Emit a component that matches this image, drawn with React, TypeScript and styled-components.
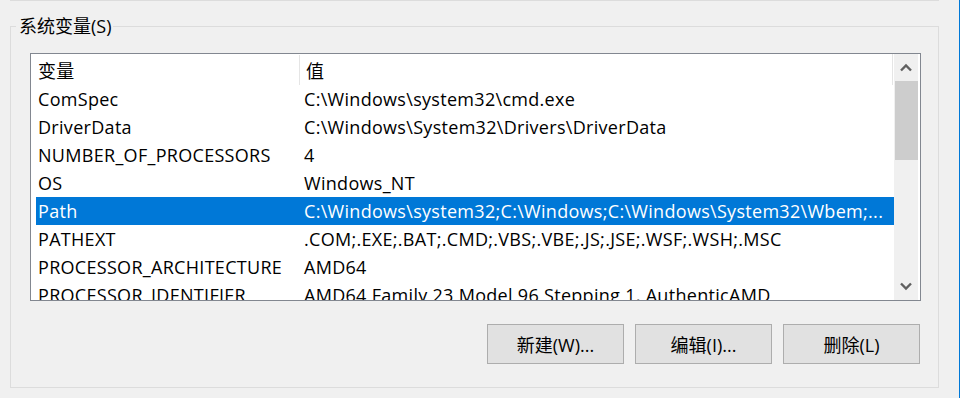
import React from "react";
import styled, { createGlobalStyle } from "styled-components";

const GlobalStyle = createGlobalStyle`
  html, body { margin: 0; padding: 0; background: #f0f0f0; overflow: hidden; }
  body {
    font-family: "Open Sans", "Noto Sans CJK SC", sans-serif;
    font-size: 18px;
    letter-spacing: 0.3px;
    color: #000;
  }
`;

const Page = styled.div`
  width: 959px;
  height: 398px;
  border-right: 1px solid #0078d7;
  display: flex;
  flex-direction: column;
`;

const PrevGroupEdge = styled.div`
  margin: 0 20px 0 10px;
  height: 0;
  border-bottom: 1px solid #dcdcdc;
`;

const Group = styled.fieldset`
  box-sizing: border-box;
  margin: 15px 20px 0 10px;
  height: 372px;
  padding: 0;
  border: 1px solid #dcdcdc;
  min-width: 0;
`;

const Legend = styled.legend`
  margin-left: 5px;
  padding: 0 1px 0 3px;
  line-height: 20px;
  letter-spacing: 0;
`;

const GroupContent = styled.div`
  padding: 17px 0 0 19px;
`;

const ListView = styled.div`
  box-sizing: border-box;
  width: 891px;
  height: 248px;
  border: 1px solid #828790;
  background: #fff;
  display: flex;
`;

const ListBody = styled.div`
  flex: 1;
  padding-left: 5px;
  overflow: hidden;
  display: flex;
  flex-direction: column;
`;

const Header = styled.div`
  display: flex;
  flex: none;
  height: 31px;
  border-right: 1px solid #e5e5e5;
  margin-right: 1px;
`;

const HeaderCell = styled.div<{ $w?: number; $pad: number }>`
  ${(p) => (p.$w ? `width: ${p.$w}px; flex: none;` : "flex: 1;")}
  padding-left: ${(p) => p.$pad}px;
  display: flex;
  align-items: center;
  border-right: ${(p) => (p.$w ? "1px solid #e5e5e5" : "none")};
  margin: 1px 0 0;
`;

const Row = styled.div<{ $selected?: boolean }>`
  display: flex;
  flex: none;
  height: 28px;
  align-items: center;
  white-space: nowrap;
  background: ${(p) => (p.$selected ? "#0078d7" : "transparent")};
  color: ${(p) => (p.$selected ? "#fff" : "#000")};
`;

const NameCell = styled.div`
  width: 259px;
  flex: none;
  padding-left: 2px;
  overflow: hidden;
`;

const ValueCell = styled.div`
  flex: 1;
  padding-left: 7px;
  overflow: hidden;
`;

const ScrollBar = styled.div`
  width: 24px;
  margin-right: 2px;
  background: #f0f0f0;
  display: flex;
  flex-direction: column;
`;

const ArrowButton = styled.div`
  height: 27px;
  flex: none;
  display: flex;
  align-items: center;
  justify-content: center;
`;

const Track = styled.div`
  flex: 1;
  display: flex;
  flex-direction: column;
`;

const Thumb = styled.div`
  margin: 0 0 0 1px;
  height: 79px;
  background: #cdcdcd;
`;

const ButtonRow = styled.div`
  display: flex;
  justify-content: flex-start;
  gap: 11px;
  margin: 23px 0 0 457px;
`;

const Button = styled.div`
  box-sizing: border-box;
  width: 137px;
  height: 40px;
  background: #e1e1e1;
  border: 1px solid #adadad;
  display: flex;
  align-items: center;
  justify-content: center;
  letter-spacing: 0;
`;

const Chevron = ({ up }: { up?: boolean }) => (
  <svg width="12" height="9" viewBox="0 0 12 9">
    <polyline
      points={up ? "1,7.5 6,2.5 11,7.5" : "1,1.5 6,6.5 11,1.5"}
      fill="none"
      stroke="#606060"
      strokeWidth="2.4"
    />
  </svg>
);

const rows: [string, string][] = [
  ["ComSpec", "C:\\Windows\\system32\\cmd.exe"],
  ["DriverData", "C:\\Windows\\System32\\Drivers\\DriverData"],
  ["NUMBER_OF_PROCESSORS", "4"],
  ["OS", "Windows_NT"],
  ["Path", "C:\\Windows\\system32;C:\\Windows;C:\\Windows\\System32\\Wbem;..."],
  ["PATHEXT", ".COM;.EXE;.BAT;.CMD;.VBS;.VBE;.JS;.JSE;.WSF;.WSH;.MSC"],
  ["PROCESSOR_ARCHITECTURE", "AMD64"],
  ["PROCESSOR_IDENTIFIER", "AMD64 Family 23 Model 96 Stepping 1, AuthenticAMD"],
];

export default function App() {
  return (
    <>
      <GlobalStyle />
      <Page>
        <PrevGroupEdge />
        <Group>
          <Legend>系统变量(S)</Legend>
          <GroupContent>
            <ListView>
              <ListBody>
                <Header>
                  <HeaderCell $w={261} $pad={2}>变量</HeaderCell>
                  <HeaderCell $pad={6}>值</HeaderCell>
                </Header>
                {rows.map(([n, v]) => (
                  <Row key={n} $selected={n === "Path"}>
                    <NameCell>{n}</NameCell>
                    <ValueCell>{v}</ValueCell>
                  </Row>
                ))}
              </ListBody>
              <ScrollBar>
                <ArrowButton>
                  <Chevron up />
                </ArrowButton>
                <Track>
                  <Thumb />
                </Track>
                <ArrowButton>
                  <Chevron />
                </ArrowButton>
              </ScrollBar>
            </ListView>
            <ButtonRow>
              <Button>新建(W)...</Button>
              <Button>编辑(I)...</Button>
              <Button>删除(L)</Button>
            </ButtonRow>
          </GroupContent>
        </Group>
      </Page>
    </>
  );
}
